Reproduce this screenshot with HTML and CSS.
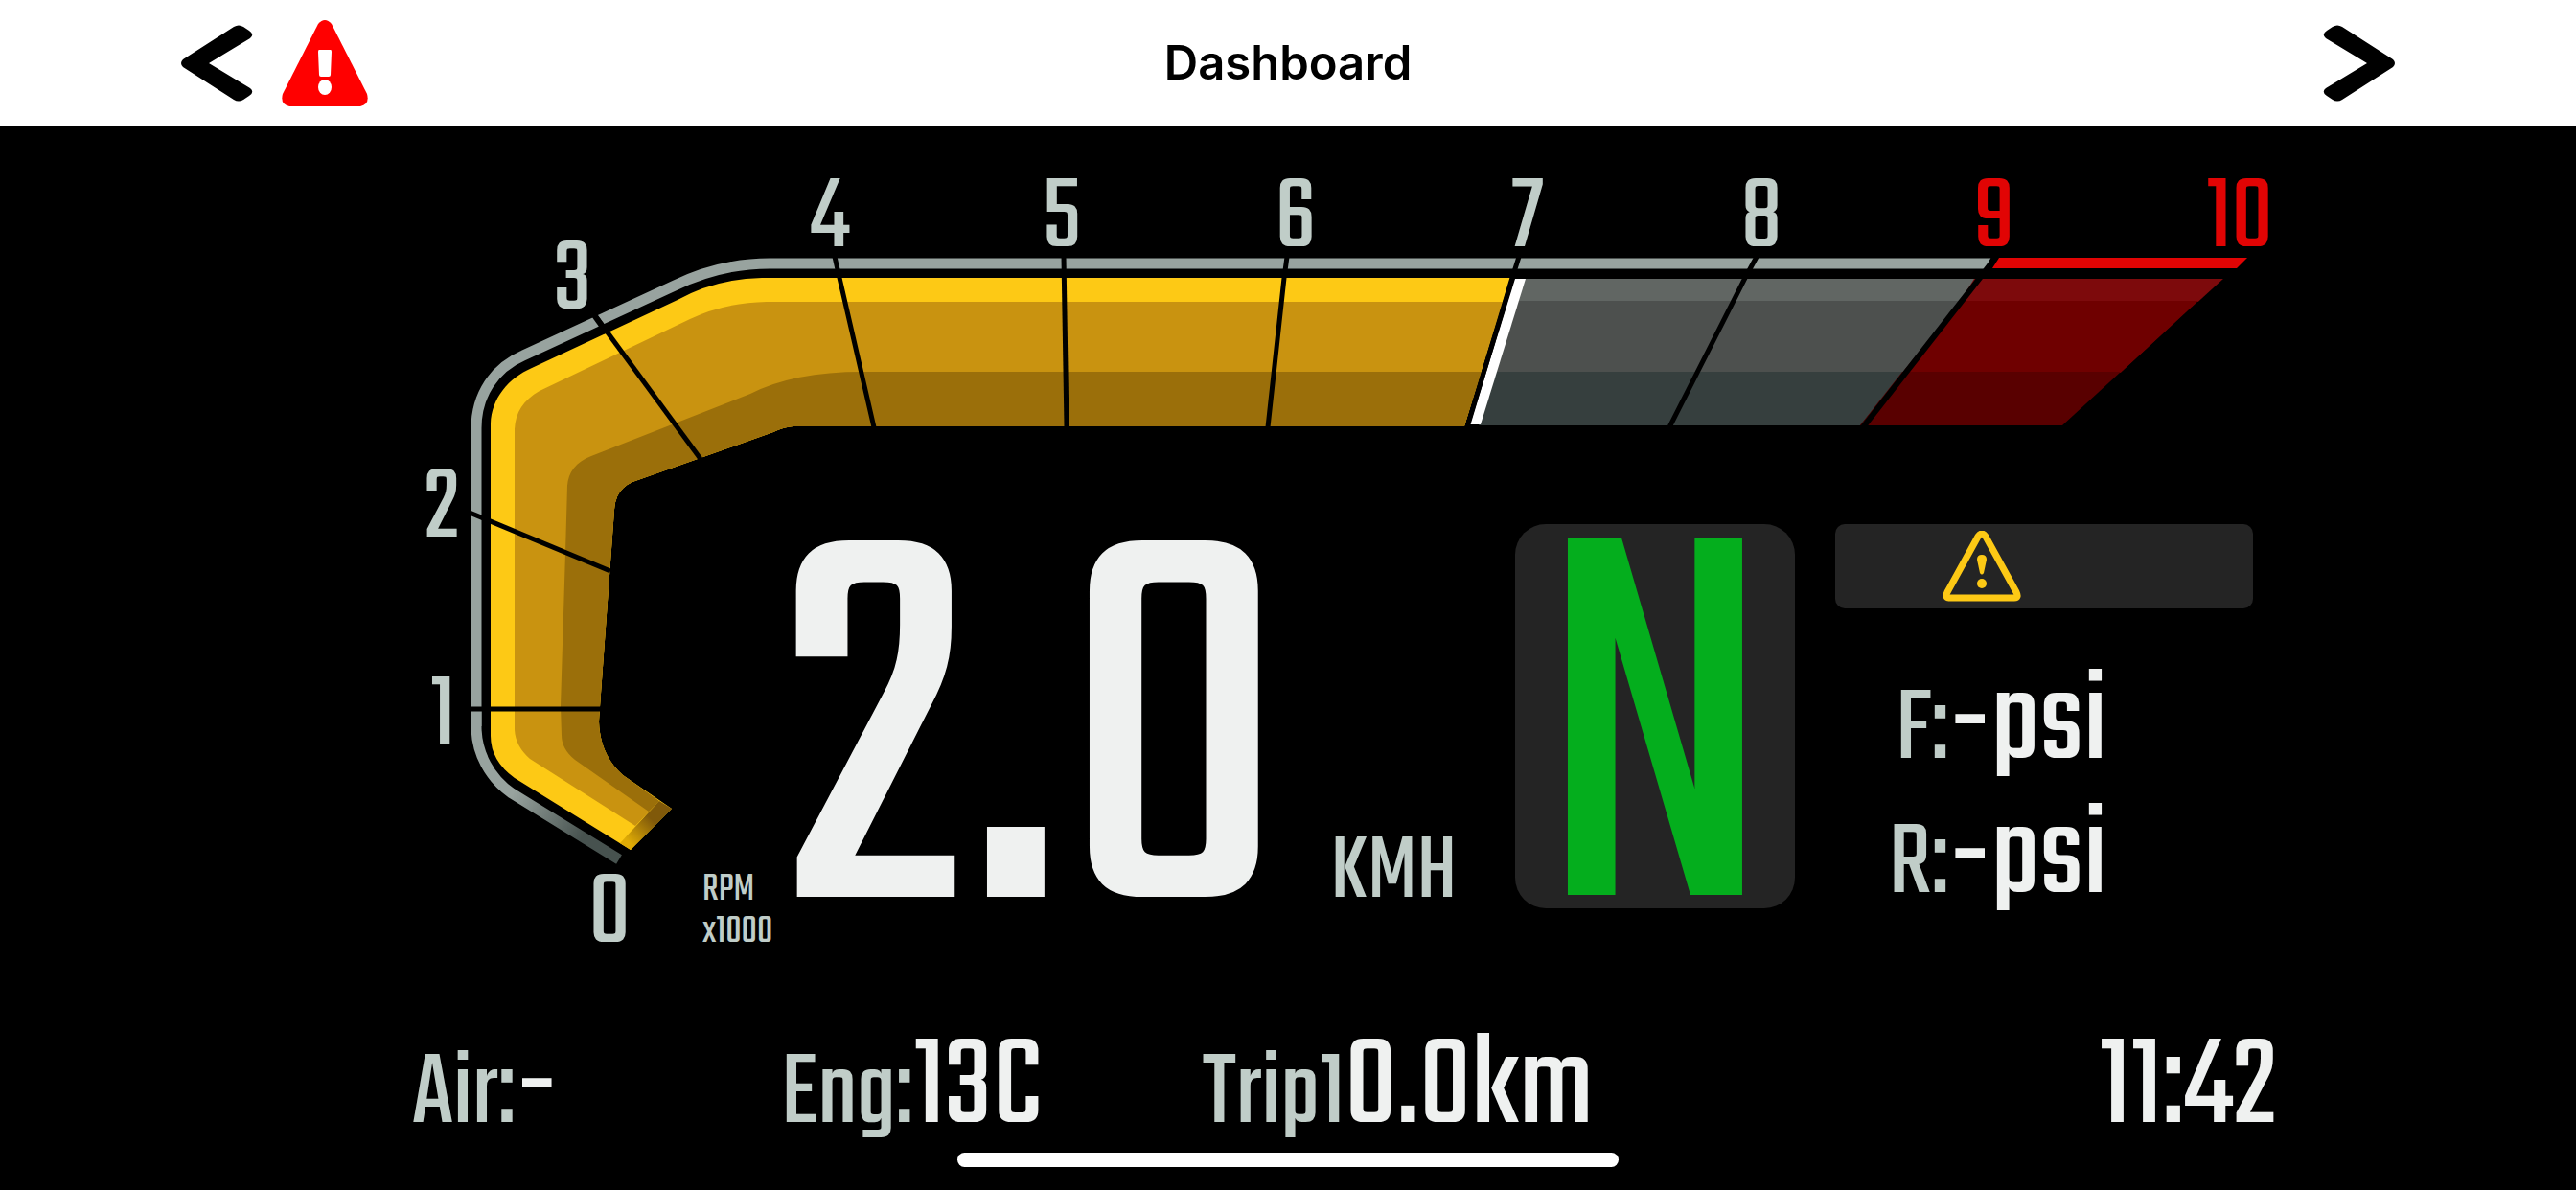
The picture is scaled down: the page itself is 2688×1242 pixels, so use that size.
FILE: index.html
```html
<!DOCTYPE html>
<html lang="en">
<head>
<meta charset="utf-8">
<title>Dashboard</title>
<meta name="viewport" content="width=device-width, initial-scale=1">
<link rel="stylesheet" href="styles.css">
</head>
<body>
<header class="topbar">
  <div class="topbar-start">
    <button class="icon-button" type="button" aria-label="Previous screen">
      <svg width="76" height="80" viewBox="0 0 76 80" aria-hidden="true"><path d="M56 2Q61 -1 66 2L72 6Q78 10 73 14L30 40L73 66Q78 70 72 74L66 78Q61 81 56 78L3 44Q-1 40 3 36Z"/></svg>
    </button>
    <button class="icon-button" type="button" aria-label="Warnings">
      <svg width="90" height="90" viewBox="0 0 90 90" aria-hidden="true"><path fill="#f00" d="M38 4Q45 -4 52 4L89 77Q92 88 82 90H8Q-2 88 1 77Z"/><path fill="#fff" d="M39 31H51Q52 31 52 33L51 57Q51 59 49 59H41Q39 59 39 57L38 33Q38 31 39 31Z"/><ellipse cx="45" cy="70" rx="7" ry="8" fill="#fff"/></svg>
    </button>
  </div>
  <h1 class="title">Dashboard</h1>
  <button class="icon-button topbar-end" type="button" aria-label="Next screen">
    <svg width="76" height="80" viewBox="0 0 76 80" aria-hidden="true"><path d="M20 2Q15 -1 10 2L4 6Q-2 10 3 14L46 40L3 66Q-2 70 4 74L10 78Q15 81 20 78L73 44Q77 40 73 36Z"/></svg>
  </button>
</header>

<main class="dash">
  <section class="cluster">
    <svg class="gauge" viewBox="0 132 2688 868" role="img" aria-label="Tachometer">
      <defs>
        <linearGradient id="rail" gradientUnits="userSpaceOnUse" x1="535" y1="828" x2="608" y2="873">
          <stop offset="0" stop-color="#98a39f"/><stop offset="1" stop-color="#47524f"/>
        </linearGradient>
        <linearGradient id="tip" gradientUnits="userSpaceOnUse" x1="653" y1="884" x2="695" y2="840">
          <stop offset="0.1" stop-color="#dfab05"/><stop offset="0.65" stop-color="#80590a"/>
        </linearGradient>
      </defs>

      <!-- outer rail -->
      <path class="rail" stroke="url(#rail)" d="M646 897L534 828C511 812 497 786 497 758V740"/>
      <path class="rail" stroke="#98a39f" d="M497 758V447C497 412 516 384 546 371L704 298C735 283 768 275 803 275H2090"/>
      <path fill="#000" d="M2079 266H2100V283H2070Z"/>
      <path fill="#e10404" d="M2086 269H2345L2334 280H2079Z"/>

      <!-- lit band -->
      <path fill="#fdc915" d="M658 887L537 812Q512 794 512 768V442C513 416 530 395 555 384L707 313Q746 291 795 290H1576L1528 445H828Q817 446 807 451L660 503Q642 511 641 532L626 738L625 753Q626 788 650 809L701 844Z"/>
      <path fill="#c99310" d="M663 862L553 792Q537 778 537 760V448C538 430 546 418 563 408L720 333Q755 316 800 315H1568L1528 445H828Q817 446 807 451L660 503Q642 511 641 532L626 738L625 753Q626 788 650 809L688 836Z"/>
      <path fill="#9b6f0a" d="M677 847L600 793Q586 782 586 767L585 737L590 577L592 507C593 493 601 482 617 476L783 411Q828 388 900 388H1546L1528 445H828Q817 446 807 451L660 503Q642 511 641 532L626 738L625 753Q626 788 650 809L688 836Z"/>
      <path fill="url(#tip)" d="M647 880L688 836L701 844L658 887Z"/>

      <!-- unlit band -->
      <path fill="#616663" d="M1590 291H2063L2051 315H1582Z"/>
      <path fill="#4d504e" d="M1582 314H2051L1985 389H1560Z"/>
      <path fill="#363f3e" d="M1560 388H1987L1941 444H1543Z"/>
      <path fill="#7d0a0c" d="M2060 291H2321L2306 315H2045Z"/>
      <path fill="#6f0000" d="M2045 314H2294L2213 389H1985Z"/>
      <path fill="#590000" d="M1985 388H2213L2152 444H1941Z"/>
      <path fill="#000" d="M2321 290L2152 445H2340V290Z"/>

      <!-- pointer -->
      <path fill="#fff" d="M1581 291H1592L1545 443H1534Z"/>

      <!-- divisions -->
      <g class="tick">
        <path d="M488 740H627"/>
        <path d="M490 535L637 596"/>
        <path d="M620 328L731 479"/>
        <path class="wide" d="M618 326L633 347" />
        <path d="M871 268L876 290L912 446"/>
        <path d="M1110 268L1113 446"/>
        <path d="M1343 268L1340 290L1323 446"/>
        <path d="M1585 268L1578 290L1531 446"/>
        <path d="M1833 268L1821 290L1742 446"/>
        <path class="wide" d="M2083 268L2066 290L1944 446"/>
      </g>

      <g class="scale">
        <text x="636" y="983">0</text>
        <text x="462" y="777">1</text>
        <text x="461" y="560">2</text>
        <text x="598" y="322">3</text>
        <text x="866" y="257">4</text>
        <text x="1108" y="257">5</text>
        <text x="1352" y="257">6</text>
        <text x="1594" y="257">7</text>
        <text x="1838" y="257">8</text>
        <text class="redline" x="2081" y="257">9</text>
        <text class="redline" x="2337" y="257">10</text>
      </g>
      <g class="scale-unit">
        <text x="733" y="939">RPM</text>
        <text x="733" y="983">x1000</text>
      </g>
    </svg>

    <div class="readouts">
      <div class="speed">
        <span class="speed-value">2.0</span>
        <span class="speed-unit">KMH</span>
      </div>
      <div class="gear">N</div>
      <div class="side">
        <div class="alert">
          <svg width="82" height="74" viewBox="0 0 82 74" role="img" aria-label="Warning"><path fill="none" stroke="#fdc915" stroke-width="7" stroke-linejoin="round" d="M37 6Q41 0 45 6L77 64Q80 70 75 70H7Q2 70 5 64Z"/><path fill="#fdc915" d="M36 30Q36 25 41 25Q46 25 46 30L43 44Q41 47 39 44Z"/><circle cx="41" cy="55" r="5" fill="#fdc915"/></svg>
        </div>
        <div class="reading"><span class="label">F:</span><span class="value">-psi</span></div>
        <div class="reading"><span class="label">R:</span><span class="value">-psi</span></div>
      </div>
    </div>
  </section>

  <section class="stats">
    <div class="reading"><span class="label">Air:</span><span class="value">-</span></div>
    <div class="reading"><span class="label">Eng:</span><span class="value">13C</span></div>
    <div class="reading"><span class="label">Trip1</span><span class="value">0.0km</span></div>
    <time class="value clock">11:42</time>
  </section>

  <div class="home-indicator"></div>
</main>
</body>
</html>
```
FILE: styles.css
```css
* {
  box-sizing: border-box;
}

body {
  margin: 0;
  background: #000;
  color: #eff1f0;
  font-family: "Teko", "Roboto Condensed", "Liberation Sans", sans-serif;
  font-weight: 400;
}

.topbar {
  display: grid;
  grid-template-columns: 1fr auto 1fr;
  align-items: center;
  height: 132px;
  padding: 0 7%;
  background: #fff;
  color: #000;
}

.topbar-start {
  display: flex;
  align-items: center;
  gap: 30px;
}

.topbar-end {
  justify-self: end;
}

.icon-button {
  display: block;
  padding: 0;
  border: 0;
  background: none;
  cursor: pointer;
}

.icon-button svg {
  display: block;
}

.title {
  margin: 0;
  font-family: "Inter", "Liberation Sans", sans-serif;
  font-size: 49px;
  font-weight: 600;
  line-height: 60px;
}

.dash {
  display: flex;
  flex-direction: column;
}

.cluster {
  display: grid;
  grid-template-columns: minmax(0, 1fr);
}

.gauge {
  grid-area: 1 / 1;
  display: block;
  width: 100%;
  overflow: visible;
}

.rail {
  fill: none;
  stroke-width: 11;
}

.tick {
  fill: none;
  stroke: #000;
  stroke-width: 5;
}

.wide {
  stroke-width: 6;
}

.scale {
  fill: #c0cdc8;
  font-size: 112px;
  text-anchor: middle;
}

.redline {
  fill: #e10404;
}

.scale-unit {
  fill: #c0cdc8;
  font-size: 42px;
}

.readouts {
  grid-area: 1 / 1;
  display: grid;
  grid-template-columns: minmax(0, 1fr) 292px 436px;
  column-gap: 42px;
  align-content: start;
  padding: 415px 337px 0 816px;
}

.speed {
  display: flex;
  align-items: baseline;
  align-self: end;
  gap: 48px;
  line-height: 288px;
}

.speed-value {
  font-size: 594px;
}

.speed-unit {
  color: #c0cdc8;
  font-size: 100px;
  line-height: 72px;
}

.gear {
  display: grid;
  place-items: center;
  height: 401px;
  padding-top: 86px;
  border-radius: 32px;
  background: #242424;
  color: #04ae1d;
  font-size: 594px;
  line-height: 300px;
}

.alert {
  display: flex;
  align-items: center;
  height: 88px;
  margin-bottom: 73px;
  padding-left: 112px;
  border-radius: 10px;
  background: #242424;
}

.reading {
  display: flex;
  align-items: baseline;
  line-height: 100px;
}

.side .reading {
  justify-content: flex-end;
  margin-bottom: 40px;
  padding-right: 152px;
}

.side .reading:last-child {
  margin-bottom: 0;
}

.label {
  color: #c0cdc8;
  font-size: 112px;
  line-height: 80px;
}

.value {
  font-size: 140px;
}

.stats {
  display: grid;
  grid-template-columns: 384fr 439fr 780fr 338fr;
  margin-top: 88px;
  padding: 0 312px 0 430px;
}

.clock {
  justify-self: end;
  line-height: 100px;
}

.home-indicator {
  align-self: center;
  width: 690px;
  height: 15px;
  margin: 15px 0 24px;
  border-radius: 8px;
  background: #fff;
}
```
